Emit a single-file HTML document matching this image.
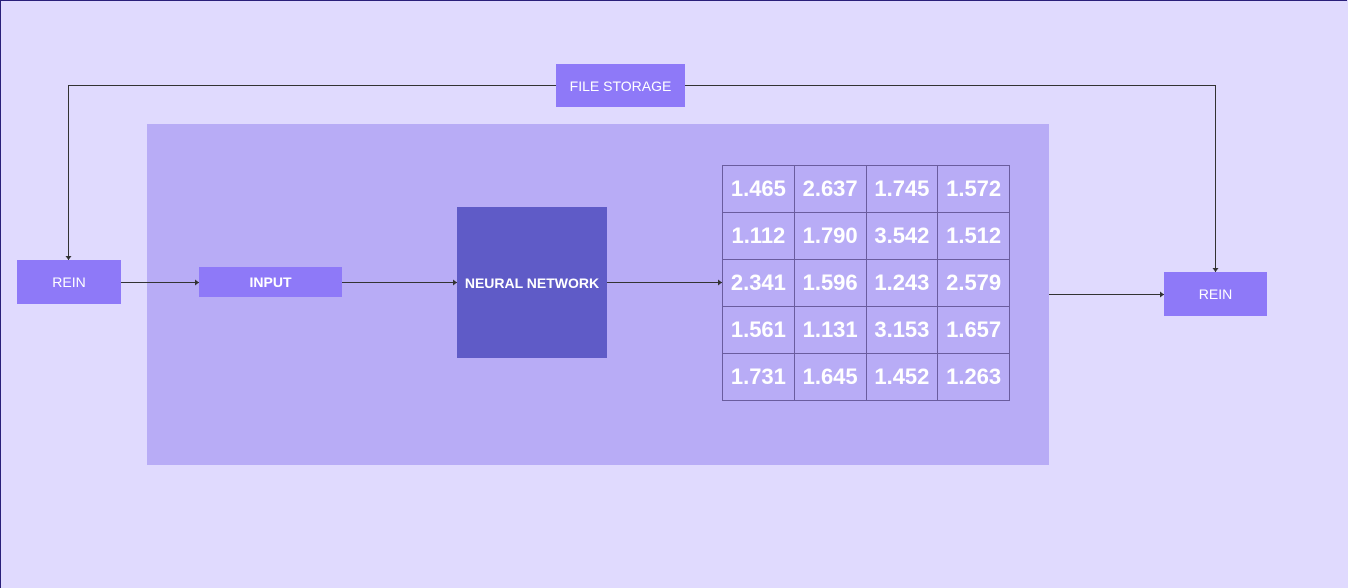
<!DOCTYPE html>
<html><head><style>
body{margin:0;width:1348px;height:587px;background:#e0dafe;position:relative;overflow:hidden;font-family:"Liberation Sans",sans-serif}
.frame{position:absolute;left:0;top:0;width:1346px;height:587px;border-left:1px solid #2a1f7a;border-top:1px solid #2a1f7a}
.b{position:absolute;background:#8e79f8;color:#fff;display:flex;align-items:center;justify-content:center;font-size:14px}
table{position:absolute;left:722px;top:165px;width:288px;border-collapse:collapse;table-layout:fixed}
td{border:1px solid #6a5c9e;height:46px;text-align:center;color:#fff;font-size:22px;font-weight:bold;padding:0}
</style></head><body>
<div class="frame"></div>
<div style="position:absolute;left:147px;top:124px;width:902px;height:341px;background:#b8acf6"></div>
<svg style="position:absolute;left:0;top:0" width="1348" height="587">
<g stroke="#333" stroke-width="1" fill="none">
<path d="M68.5 260V85.5H1215.5V272"/>
<path d="M121 282.5H199M342 282.5H457M607 282.5H722M1049 294.5H1164"/>
</g>
<g fill="#333">
<path d="M65.5 256l3 4 3-4z"/><path d="M1212.5 268l3 4 3-4z"/>
<path d="M195 279.5l4 3-4 3z"/><path d="M453 279.5l4 3-4 3z"/><path d="M718 279.5l4 3-4 3z"/><path d="M1160 291.5l4 3-4 3z"/>
</g></svg>
<div class="b" style="left:556px;top:64px;width:129px;height:43px">FILE STORAGE</div>
<div class="b" style="left:17px;top:260px;width:104px;height:44px">REIN</div>
<div class="b" style="left:199px;top:267px;width:143px;height:30px;font-weight:bold">INPUT</div>
<div class="b" style="left:457px;top:207px;width:150px;height:151px;background:#5f5bc7;font-weight:bold">NEURAL NETWORK</div>
<div class="b" style="left:1164px;top:272px;width:103px;height:44px">REIN</div>
<table>
<tr><td>1.465</td><td>2.637</td><td>1.745</td><td>1.572</td></tr>
<tr><td>1.112</td><td>1.790</td><td>3.542</td><td>1.512</td></tr>
<tr><td>2.341</td><td>1.596</td><td>1.243</td><td>2.579</td></tr>
<tr><td>1.561</td><td>1.131</td><td>3.153</td><td>1.657</td></tr>
<tr><td>1.731</td><td>1.645</td><td>1.452</td><td>1.263</td></tr>
</table>
</body></html>
